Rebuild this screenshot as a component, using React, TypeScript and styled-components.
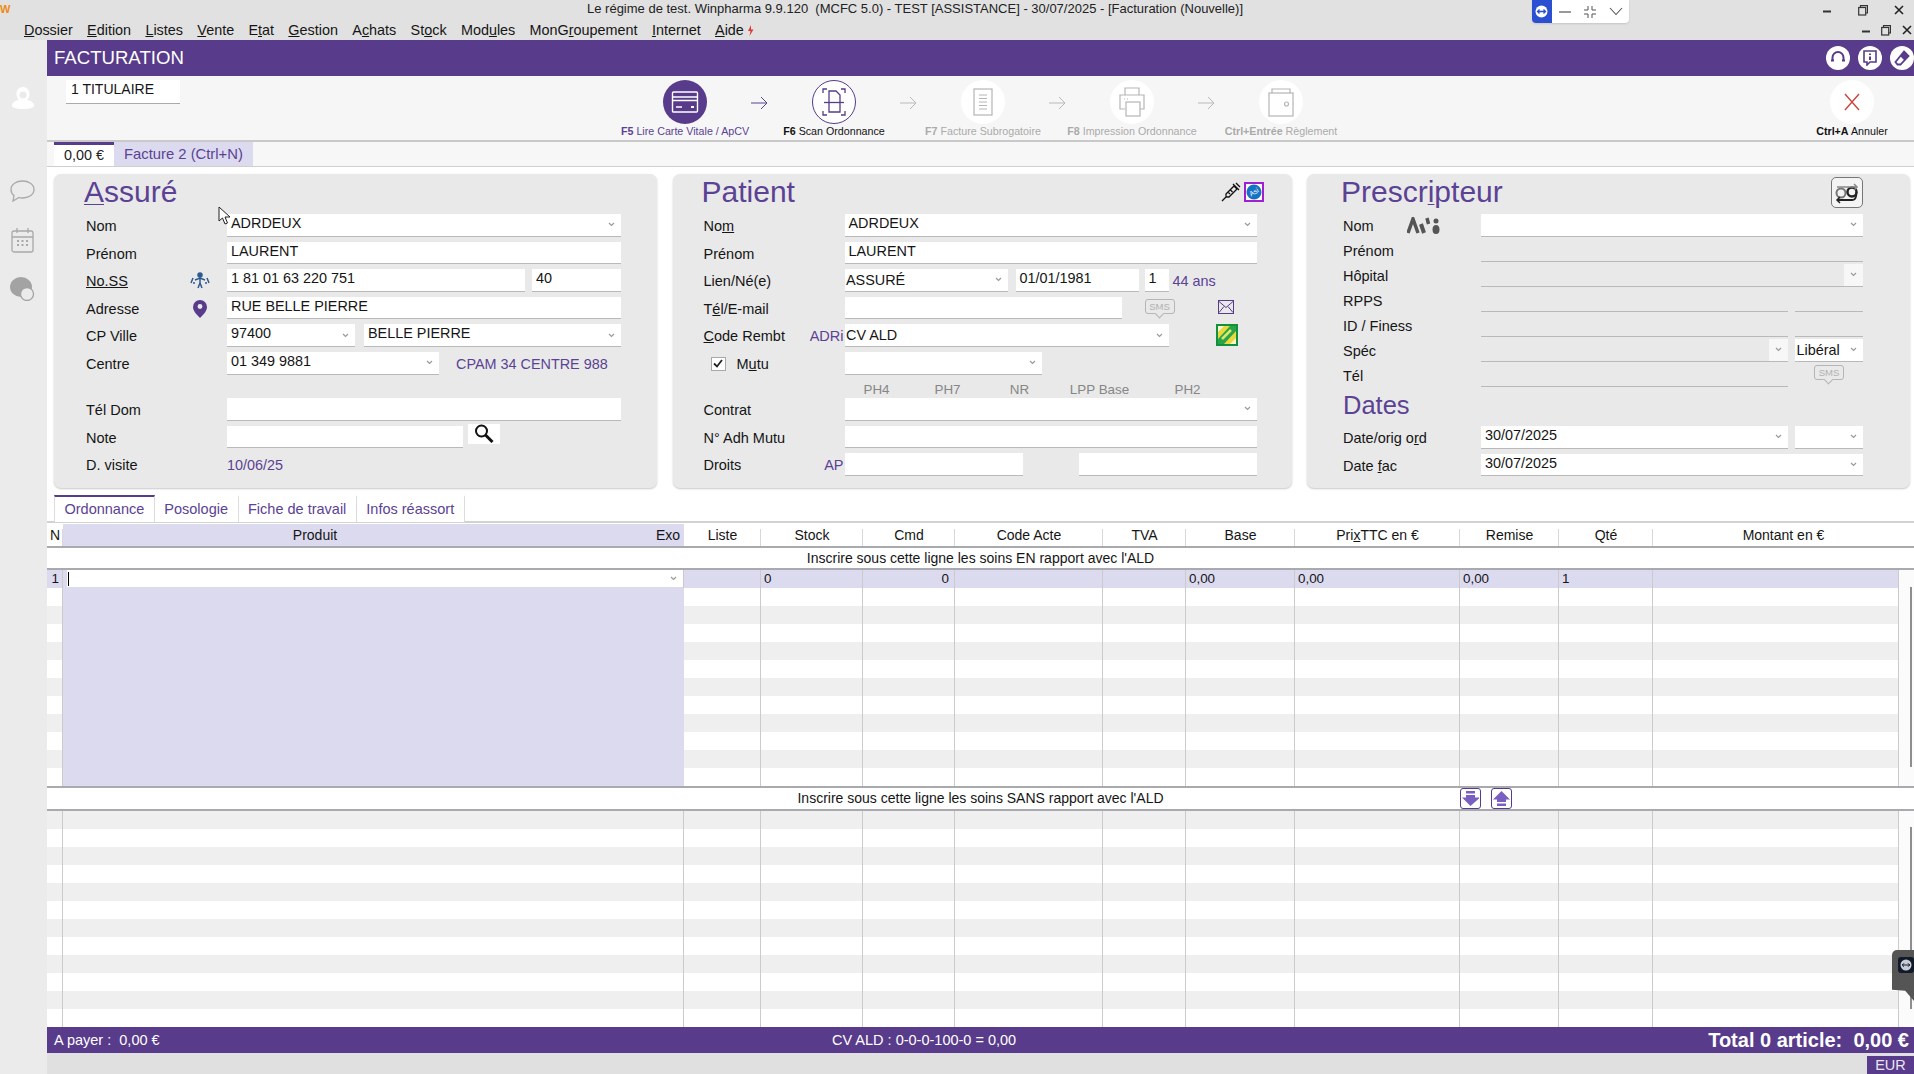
import React from 'react'
import styled, { createGlobalStyle } from 'styled-components'

const PURPLE = '#583b8a'
const TEXT_PURPLE = '#5b4294'
const LAVENDER = '#dcdaef'
const LINE = '#a9a9b0'
const COLS = '16px 621px 77px 102px 92px 148px 83px 109px 165px 99px 94px 246px'

const Global = createGlobalStyle`
  html, body { margin: 0; padding: 0; background: #e1e1e1; }
  body { font-family: "Liberation Sans", Arial, sans-serif; font-size: 14.5px; color: #151515; }
  * { box-sizing: border-box; }
`

const Screen = styled.div`
  width: 1914px;
  height: 1074px;
  overflow: hidden;
  position: relative;
  display: flex;
  flex-direction: column;
  background: #e1e1e1;
`

const TitleBar = styled.div`
  height: 24px;
  display: flex;
  align-items: flex-start;
  flex: none;
`
const AppLogo = styled.div`
  width: 587px;
  font-size: 11px;
  font-weight: 700;
  line-height: 18px;
  color: #f08a12;
`
const AppTitle = styled.div`
  width: 659px;
  white-space: pre;
  font-size: 13px;
  line-height: 18px;
  color: #222;
`
const RemoteBar = styled.div`
  margin-left: 286px;
  width: 97px;
  height: 23px;
  display: flex;
  align-items: center;
  background: #fff;
  border-radius: 0 0 4px 4px;
  box-shadow: 0 1px 2px rgba(0, 0, 0, 0.12);
`
const RemoteBadge = styled.div`
  width: 20px;
  height: 23px;
  display: grid;
  place-items: center;
  background: #2a4fd0;
  border-radius: 0 0 0 4px;
`
const RemoteBtn = styled.div`
  width: 26px;
  display: grid;
  place-items: center;
`
const WinControls = styled.div<{ $w: number; $pr: number }>`
  margin-left: auto;
  width: ${p => p.$w}px;
  display: flex;
  justify-content: space-between;
  align-items: center;
  height: 20px;
  padding-right: ${p => p.$pr}px;
  color: #222;
`

const MenuBar = styled.div`
  height: 16px;
  padding: 0 0 4px 24px;
  display: flex;
  align-items: center;
  gap: 14.3px;
  flex: none;
  line-height: 16px;
  font-size: 14.4px;
`
const MenuItem = styled.span`
  white-space: nowrap;
  u { text-underline-offset: 1px; }
`
const Flash = styled.svg`
  margin-left: -11px;
`

const Body = styled.div`
  display: flex;
  flex: 1;
  min-height: 0;
`
const Sidebar = styled.div`
  width: 47px;
  flex: none;
  background: #ebebeb;
  display: flex;
  flex-direction: column;
  align-items: center;
  padding-top: 47px;
  padding-right: 2px;
`
const SideIcon = styled.div<{ $top: number }>`
  margin-top: ${p => p.$top}px;
  line-height: 0;
`
const Main = styled.div`
  flex: 1;
  min-width: 0;
  display: flex;
  flex-direction: column;
  background: #fff;
`

const PageHeader = styled.div`
  height: 36px;
  flex: none;
  background: ${PURPLE};
  color: #fff;
  display: flex;
  align-items: center;
  padding-left: 7px;
  font-size: 18.6px;
`
const HeaderTools = styled.div`
  margin-left: auto;
  display: flex;
  gap: 8px;
`
const HeaderTool = styled.div`
  width: 24px;
  height: 24px;
  border-radius: 50%;
  background: #fff;
  display: grid;
  place-items: center;
`

const Toolbar = styled.div`
  height: 66px;
  flex: none;
  background: #f6f6f6;
  border-bottom: 2px solid #c9c9c9;
  display: flex;
  align-items: flex-start;
  padding-top: 4px;
`
const Holder = styled.div`
  width: 114px;
  height: 24px;
  margin-left: 19px;
  padding-left: 5px;
  background: #fff;
  border-bottom: 1.5px solid #aaa;
  font-size: 14px;
  line-height: 18px;
`
const Steps = styled.div`
  margin-left: 445px;
  display: flex;
`
const Step = styled.div`
  width: 120px;
  display: flex;
  flex-direction: column;
  align-items: center;
`
const StepCircle = styled.div<{ $kind: 'on' | 'ring' | 'off' }>`
  width: 44px;
  height: 44px;
  border-radius: 50%;
  display: grid;
  place-items: center;
  background: ${p => (p.$kind === 'on' ? PURPLE : '#fff')};
  border: ${p => (p.$kind === 'ring' ? `1.5px solid ${PURPLE}` : 'none')};
`
const StepLabel = styled.div<{ $kind: 'on' | 'ring' | 'off' }>`
  margin-top: 1px;
  font-size: 10.7px;
  line-height: 13px;
  white-space: nowrap;
  color: ${p => (p.$kind === 'on' ? TEXT_PURPLE : p.$kind === 'ring' ? '#111' : '#aaa')};
  b { font-weight: 700; }
`
const StepArrow = styled.div`
  width: 29px;
  height: 46px;
  display: grid;
  place-items: center;
`
const CancelStep = styled(Step)`
  margin-left: auto;
  margin-right: 2px;
`

const TabBar = styled.div`
  height: 25px;
  flex: none;
  background: #f7f7f7;
  border-bottom: 1.5px solid #cfcfcf;
  display: flex;
  padding-left: 7px;
`
const DocTab = styled.div<{ $active?: boolean }>`
  height: 24px;
  padding: 0 10px;
  font-size: ${p => (p.$active ? 14.4 : 14.8)}px;
  color: ${p => (p.$active ? '#222' : TEXT_PURPLE)};
  background: ${p => (p.$active ? '#fff' : LAVENDER)};
  border-top: ${p => (p.$active ? `3px solid ${PURPLE}` : '0')};
  line-height: ${p => (p.$active ? 21 : 24)}px;
`

const Panels = styled.div`
  display: grid;
  grid-template-columns: 603px 619px 603px;
  column-gap: 15.5px;
  padding: 7px 0 0 7px;
  flex: none;
`
const Panel = styled.section<{ $left: number }>`
  height: 314px;
  padding-left: ${p => p.$left}px;
  background: #e9e9e9;
  border-radius: 7px;
  box-shadow: 0 1px 2px rgba(0, 0, 0, 0.22);
`
const PanelHead = styled.div<{ $pr: number }>`
  height: 40px;
  display: flex;
  align-items: flex-start;
  justify-content: space-between;
  padding-right: ${p => p.$pr}px;
`
const PanelTitle = styled.h2`
  margin: 1px 0 0 -2px;
  font-size: 30px;
  line-height: 34px;
  font-weight: 400;
  color: ${TEXT_PURPLE};
  u { text-underline-offset: 2px; text-decoration-thickness: 1px; }
`
const Rows = styled.div<{ $gap?: number }>`
  display: flex;
  flex-direction: column;
  gap: ${p => p.$gap ?? 5.6}px;
`
const Row = styled.div<{ $h?: number }>`
  height: ${p => p.$h ?? 22}px;
  display: flex;
  align-items: flex-start;
`
const Label = styled.div<{ $w: number; $lh?: number }>`
  width: ${p => p.$w}px;
  flex: none;
  height: 100%;
  line-height: ${p => p.$lh ?? 24}px;
  font-size: 14.5px;
  display: flex;
  align-items: flex-start;
  white-space: nowrap;
`
const LabelGlyph = styled.span<{ $x: number }>`
  margin-left: auto;
  margin-right: ${p => p.$x}px;
  line-height: 0;
  padding-top: 3px;
`
const LabelCode = styled.span`
  margin-left: auto;
  color: ${TEXT_PURPLE};
  padding-right: 1px;
`
const Field = styled.div<{ $w: number; $ml?: number; $mt?: number; $tight?: boolean; $clear?: boolean }>`
  width: ${p => p.$w}px;
  flex: none;
  height: ${p => (p.$clear ? 25 : 22.6)}px;
  margin-left: ${p => p.$ml ?? 0}px;
  margin-top: ${p => p.$mt ?? 0}px;
  padding-left: ${p => (p.$tight ? 1.5 : 4)}px;
  background: ${p => (p.$clear ? 'transparent' : '#fff')};
  border-bottom: 1.5px solid #b9b9b9;
  font-size: 14.4px;
  line-height: ${p => (p.$tight ? 22 : 18)}px;
  display: flex;
  align-items: flex-start;
  white-space: nowrap;
`
const Drop = styled.span<{ $box?: boolean }>`
  margin-left: auto;
  width: 19px;
  height: ${p => (p.$box ? '22px' : '100%')};
  align-self: ${p => (p.$box ? 'flex-end' : 'auto')};
  display: grid;
  place-items: center;
  background: ${p => (p.$box ? '#f7f7f7' : 'transparent')};
`
const Note = styled.span<{ $ml?: number }>`
  margin-left: ${p => p.$ml ?? 0}px;
  color: ${TEXT_PURPLE};
  line-height: 24px;
  font-size: 14.4px;
  white-space: nowrap;
`
const Gap = styled.div<{ $h: number }>`
  height: ${p => p.$h}px;
`
const SearchBtn = styled.div`
  width: 32px;
  height: 20px;
  margin: -2px 0 0 5px;
  background: #fff;
  display: grid;
  place-items: center;
`
const Sms = styled.div<{ $ml: number; $mt?: number }>`
  margin-left: ${p => p.$ml}px;
  margin-top: ${p => p.$mt ?? 2}px;
  width: 30px;
  height: 15px;
  border: 1px solid #b5b5b5;
  border-radius: 3px;
  font-size: 9.5px;
  line-height: 13px;
  text-align: center;
  color: #b0b0b0;
  position: relative;
  &::after {
    content: '';
    position: absolute;
    left: 10px;
    bottom: -4px;
    width: 6px;
    height: 6px;
    background: #e9e9e9;
    border-right: 1px solid #b5b5b5;
    border-bottom: 1px solid #b5b5b5;
    transform: rotate(45deg);
  }
`
const RowIcon = styled.div<{ $ml: number; $mt?: number }>`
  margin-left: ${p => p.$ml}px;
  margin-top: ${p => p.$mt ?? 0}px;
  line-height: 0;
`
const Check = styled.div`
  width: 15px;
  height: 14px;
  margin: 5px 11px 0 7px;
  background: #fff;
  border: 1px solid #a8a8a8;
  display: grid;
  place-items: center;
`
const PhRow = styled.div`
  height: 12.8px;
  display: flex;
  color: #868686;
  font-size: 13.4px;
  line-height: 14px;
  padding-top: 3.5px;
`
const PhLabel = styled.span<{ $w: number; $ml?: number }>`
  width: ${p => p.$w}px;
  margin-left: ${p => p.$ml ?? 0}px;
  text-align: center;
  white-space: nowrap;
`
const SwapBtn = styled.div`
  width: 32px;
  height: 31px;
  margin-top: 3px;
  border: 1px solid #777;
  border-radius: 5px;
  background: #f4f4f4;
  display: grid;
  place-items: center;
`
const HeadIcons = styled.div`
  display: flex;
  gap: 3px;
  margin-top: 8px;
`
const SubTitle = styled.h3`
  margin: 0;
  height: 39.3px;
  font-size: 25.5px;
  line-height: 36px;
  font-weight: 400;
  color: ${TEXT_PURPLE};
`

const SubTabs = styled.div`
  height: 28px;
  margin-top: 7px;
  flex: none;
  display: flex;
  padding-left: 7px;
  border-bottom: 2px solid #d2d2d2;
`
const SubTab = styled.div<{ $active?: boolean }>`
  height: 27px;
  padding: 0 ${p => (p.$active ? 9.5 : 9.5)}px;
  font-size: 14.5px;
  color: ${TEXT_PURPLE};
  white-space: nowrap;
  border-right: 1px solid #dcdcdc;
  background: #fff;
  border-top: ${p => (p.$active ? `2px solid ${PURPLE}` : '2px solid transparent')};
  border-left: ${p => (p.$active ? '1px solid #dcdcdc' : '0')};
  line-height: 25px;
`

const HeaderRow = styled.div`
  margin-top: 1px;
  height: 24px;
  flex: none;
  display: grid;
  grid-template-columns: ${COLS} 1fr;
  border-bottom: 2px solid ${LINE};
  font-size: 14px;
`
const HeadCell = styled.div<{ $lav?: boolean; $span?: number }>`
  height: 22px;
  line-height: 22px;
  text-align: center;
  white-space: nowrap;
  grid-column: span ${p => p.$span ?? 1};
  background: ${p => (p.$lav ? LAVENDER : 'transparent')};
  position: relative;
  &::after {
    content: '';
    position: absolute;
    right: 0;
    top: 5px;
    bottom: 0;
    width: 1px;
    background: ${p => (p.$lav || p.$span ? 'transparent' : '#d8d8d8')};
  }
`
const ProductHead = styled(HeadCell)`
  display: flex;
  text-align: left;
  padding-right: 4px;
`
const ProductName = styled.span`
  width: 504px;
  text-align: center;
`
const ProductExo = styled.span`
  margin-left: auto;
`
const NoticeRow = styled.div`
  height: 22px;
  flex: none;
  display: grid;
  grid-template-columns: 1fr 400px 1fr;
  border-bottom: 2px solid ${LINE};
  background: #fff;
  font-size: 14px;
  line-height: 21px;
  text-align: center;
`
const NoticeRow2 = styled(NoticeRow)`
  height: 25px;
  border-top: 2px solid ${LINE};
`
const MoveBtns = styled.div`
  display: flex;
  gap: 10px;
  padding-left: 279px;
`
const MoveBtn = styled.div`
  width: 21px;
  height: 21px;
  border: 1px solid ${PURPLE};
  border-radius: 3px;
  background: #fff;
  display: grid;
  place-items: center;
`
const GridBlock = styled.div`
  display: flex;
  flex: none;
`
const GridRows = styled.div`
  width: 1852px;
`
const GridRow = styled.div<{ $tone: 'white' | 'grey' | 'lav' }>`
  height: 18px;
  display: grid;
  grid-template-columns: ${COLS};
  font-size: 13.4px;
  line-height: 18px;
  background: ${p => (p.$tone === 'lav' ? LAVENDER : p.$tone === 'grey' ? '#efefef' : '#fff')};
`
const GridCell = styled.div<{ $lav?: boolean; $right?: boolean }>`
  border-right: 1px solid ${p => (p.$lav ? 'transparent' : '#cbcbcb')};
  background: ${p => (p.$lav ? LAVENDER : 'transparent')};
  padding: 0 5px 0 3px;
  text-align: ${p => (p.$right ? 'right' : 'left')};
  white-space: nowrap;
`
const BlankCell = styled(GridCell)`
  padding: 0;
`
const NumCell = styled(GridCell)`
  padding: 0 3px 0 0;
  text-align: right;
`
const ProductInput = styled.div`
  height: 17px;
  margin-left: 4px;
  background: #fff;
  display: flex;
  align-items: center;
  justify-content: space-between;
  padding-right: 6px;
`
const Caret = styled.span`
  width: 1px;
  height: 14px;
  margin-left: 1px;
  background: #000;
`
const ScrollTrack = styled.div`
  flex: 1;
  background: #fbfbfb;
`
const ScrollThumb = styled.div<{ $top: number; $h: number }>`
  width: 2px;
  height: ${p => p.$h}px;
  margin: ${p => p.$top}px 0 0 11px;
  background: #8e8e8e;
`
const StatusBar = styled.div`
  height: 26px;
  flex: none;
  background: ${PURPLE};
  color: #fff;
  display: flex;
  align-items: center;
  font-size: 14.5px;
  padding: 0 5px 0 7px;
  white-space: pre;
`
const StatusLeft = styled.div`
  width: 778px;
`
const StatusTotal = styled.div`
  margin-left: auto;
  font-size: 20px;
  font-weight: 700;
`
const FootBar = styled.div`
  height: 21px;
  flex: none;
  background: #e0e0e0;
  display: flex;
  justify-content: flex-end;
  align-items: flex-end;
`
const Currency = styled.div`
  width: 47px;
  height: 18px;
  background: ${PURPLE};
  color: #e8e4f2;
  text-align: center;
  line-height: 18px;
  font-size: 14.5px;
`
const RemoteTab = styled.div`
  position: absolute;
  right: 0;
  top: 950px;
  width: 22px;
  height: 51px;
  background: #555;
  border-radius: 5px 0 0 0;
  clip-path: polygon(0 0, 100% 0, 100% 100%, 60% 80%, 0 78%);
  padding: 7px 0 0 6px;
`
const RemoteTabIcon = styled.div`
  width: 16px;
  height: 16px;
  background: #111a2b;
  border-radius: 3px;
  display: grid;
  place-items: center;
`
const PointerWrap = styled.div`
  position: absolute;
  left: 218px;
  top: 206px;
  line-height: 0;
`

const Chev = () => (
  <svg width="7" height="5" viewBox="0 0 7 5"><path d="M1 1l2.5 2.5L6 1" fill="none" stroke="#9a9a9a" strokeWidth="1.2" /></svg>
)

const Arrow = ({ on }: { on?: boolean }) => (
  <svg width="18" height="14" viewBox="0 0 18 14"><path d="M0 7h16M10 1l6 6-6 6" fill="none" stroke={on ? '#5b4294' : '#b9b9b9'} strokeWidth="1" /></svg>
)

const MinGlyph = () => (
  <svg width="8" height="8" viewBox="0 0 8 8"><path d="M0 5.5h8" stroke="#333" strokeWidth="2" /></svg>
)
const RestoreGlyph = () => (
  <svg width="10" height="11" viewBox="0 0 10 11" fill="none" stroke="#333" strokeWidth="1.2"><path d="M2.5 2V.7h7V8H7.5" /><rect x=".7" y="2.5" width="7" height="7.5" /></svg>
)
const CloseGlyph = () => (
  <svg width="10" height="10" viewBox="0 0 10 10"><path d="M1 1l8 8M9 1l-8 8" stroke="#222" strokeWidth="1.6" /></svg>
)

const CardIcon = () => (
  <svg width="28" height="28" viewBox="0 0 28 28" fill="none" stroke="#fff" strokeWidth="1.4">
    <rect x="1.5" y="4" width="25" height="20" rx="1" />
    <path d="M1.5 9h25M1.5 12.5h25M5 19h6" />
    <path d="M20 19h3" strokeWidth="2" />
  </svg>
)
const ScanIcon = () => (
  <svg width="28" height="30" viewBox="0 0 28 30" fill="none" stroke={PURPLE} strokeWidth="1.3">
    <path d="M3 6V2h4M21 2h4v4M3 24v4h4M21 28h4v-4" />
    <path d="M9 25V4h7l4 4v17z" />
    <path d="M4 15.5h20" />
  </svg>
)
const DocIcon = () => (
  <svg width="20" height="28" viewBox="0 0 20 28" fill="none" stroke="#b5b5b5" strokeWidth="1.2">
    <rect x="1" y="1" width="18" height="26" />
    <path d="M6 7h8M6 10.5h8M6 14h8M6 17.5h8M6 21h8" />
  </svg>
)
const PrinterIcon = () => (
  <svg width="26" height="30" viewBox="0 0 26 30" fill="none" stroke="#b5b5b5" strokeWidth="1.2">
    <path d="M6 8V1h14v7M6 22H1V8h24v14h-4" />
    <rect x="7" y="15" width="14" height="14" fill="#fff" />
    <path d="M5 12h1M8 12h1" />
  </svg>
)
const WalletIcon = () => (
  <svg width="26" height="30" viewBox="0 0 26 30" fill="none" stroke="#b5b5b5" strokeWidth="1.2">
    <path d="M4 6V2h18v4" />
    <rect x="1" y="6" width="24" height="23" />
    <circle cx="18.5" cy="17" r="2" />
  </svg>
)
const CloseIcon = () => (
  <svg width="16" height="20" viewBox="0 0 16 20" fill="none" stroke="#c8453f" strokeWidth="1.4"><path d="M1 2l14 16M15 2L1 18" /></svg>
)

const steps = [
  { key: 'F5', rest: ' Lire Carte Vitale / ApCV', kind: 'on' as const, icon: <CardIcon />, arrow: true },
  { key: 'F6', rest: ' Scan Ordonnance', kind: 'ring' as const, icon: <ScanIcon />, arrow: false },
  { key: 'F7', rest: ' Facture Subrogatoire', kind: 'off' as const, icon: <DocIcon />, arrow: false },
  { key: 'F8', rest: ' Impression Ordonnance', kind: 'off' as const, icon: <PrinterIcon />, arrow: false },
  { key: 'Ctrl+Entrée', rest: ' Règlement', kind: 'off' as const, icon: <WalletIcon /> },
]

const menu: [string, string, string][] = [
  ['', 'D', 'ossier'], ['', 'E', 'dition'], ['', 'L', 'istes'], ['', 'V', 'ente'], ['E', 't', 'at'], ['', 'G', 'estion'],
  ['A', 'c', 'hats'], ['St', 'o', 'ck'], ['Mod', 'u', 'les'], ['MonG', 'r', 'oupement'], ['', 'I', 'nternet'], ['', 'A', 'ide'],
]

const productRows = Array.from({ length: 11 })
const lowerRows = Array.from({ length: 12 })
const columnCount = 12

const BlankRowCells = ({ lav }: { lav?: boolean }) => (
  <>
    {Array.from({ length: columnCount }).map((_, i) => (
      <BlankCell key={i} $lav={lav && i === 1} />
    ))}
  </>
)

export default function App() {
  return (
    <Screen>
      <Global />
      <TitleBar>
        <AppLogo>W</AppLogo>
        <AppTitle>{'Le régime de test. Winpharma 9.9.120  (MCFC 5.0) - TEST [ASSISTANCE] - 30/07/2025 - [Facturation (Nouvelle)]'}</AppTitle>
        <RemoteBar>
          <RemoteBadge>
            <svg width="13" height="13" viewBox="0 0 13 13"><circle cx="6.5" cy="6.5" r="6" fill="#fff" /><path d="M2.500 6.500h8M4.500 4.500l-2 2 2 2M8.500 4.500l2 2-2 2" stroke="#2a4fd0" strokeWidth="1.3" fill="none" /></svg>
          </RemoteBadge>
          <RemoteBtn><svg width="12" height="12" viewBox="0 0 12 12"><path d="M0 6h12" stroke="#555" strokeWidth="1.2" /></svg></RemoteBtn>
          <RemoteBtn><svg width="14" height="14" viewBox="0 0 14 14" fill="none" stroke="#555"><path d="M5 1v4H1M9 1v4h4M5 13V9H1M9 13V9h4" /></svg></RemoteBtn>
          <RemoteBtn><svg width="14" height="9" viewBox="0 0 14 9"><path d="M1 1l6 6.500L13 1" fill="none" stroke="#555" strokeWidth="1.1" /></svg></RemoteBtn>
        </RemoteBar>
        <WinControls $w={91} $pr={10}>
          <MinGlyph />
          <RestoreGlyph />
          <CloseGlyph />
        </WinControls>
      </TitleBar>
      <MenuBar>
        {menu.map(([a, u, b]) => (
          <MenuItem key={a + u + b}>{a}<u>{u}</u>{b}</MenuItem>
        ))}
        <Flash width="7" height="11" viewBox="0 0 7 11"><path d="M4 0L1 6h2.500L2.500 11 6.500 4.500H4z" fill="#e0383a" /></Flash>
        <WinControls $w={52} $pr={2}>
          <MinGlyph />
          <RestoreGlyph />
          <CloseGlyph />
        </WinControls>
      </MenuBar>
      <Body>
        <Sidebar>
          <SideIcon $top={0}>
            <svg width="26" height="22" viewBox="0 0 26 22"><path d="M13 0c4 0 6.500 3 6.500 7 0 2.500-1 4.500-2.500 6 3 .5 7 2 7 6 0 1.500-4 3-11 3S2 20.500 2 19c0-4 4-5.500 7-6-1.500-1.500-2.500-3.500-2.500-6 0-4 2.500-7 6.500-7z" fill="#fff" /><circle cx="13" cy="8" r="3.500" fill="#ebebeb" /></svg>
          </SideIcon>
          <SideIcon $top={71}>
            <svg width="25" height="22" viewBox="0 0 25 22" fill="none" stroke="#a9a9a9" strokeWidth="1.3"><path d="M12.500 1C18.500 1 24 4.200 24 9.500S18.500 18 12.500 18c-1.200 0-2.500-.2-3.500-.5L3 21l1-5.500C2 14 1 12 1 9.500 1 4.200 6.500 1 12.500 1z" /></svg>
          </SideIcon>
          <SideIcon $top={26}>
            <svg width="23" height="25" viewBox="0 0 23 25" fill="none" stroke="#a9a9a9" strokeWidth="1.3"><rect x="1" y="3" width="21" height="21" rx="2" /><path d="M1 9h21M6 0v5M17 0v5" /><path d="M6 13h2M10.500 13h2M15 13h2M6 17h2M10.500 17h2M15 17h2" strokeWidth="2" /></svg>
          </SideIcon>
          <SideIcon $top={24}>
            <svg width="25" height="24" viewBox="0 0 25 24"><ellipse cx="11" cy="10" rx="11" ry="10" fill="#a3a3a3" /><circle cx="17" cy="17" r="6.500" fill="#ebebeb" stroke="#a3a3a3" strokeWidth="1.3" /></svg>
          </SideIcon>
        </Sidebar>
        <Main>
          <PageHeader>
            FACTURATION
            <HeaderTools>
              <HeaderTool>
                <svg width="16" height="16" viewBox="0 0 16 16" fill="none" stroke={PURPLE} strokeWidth="2"><path d="M2.500 11V7.500a5.500 5.500 0 0 1 11 0V11" /><path d="M2.500 9.500v2M13.500 9.500v2" strokeWidth="3" /></svg>
              </HeaderTool>
              <HeaderTool>
                <svg width="14" height="16" viewBox="0 0 14 16"><path d="M1 1h12v11H7l-3 3v-3H1z" fill="none" stroke={PURPLE} strokeWidth="1.6" /><path d="M7 3.500v1.500M7 6.500V10" stroke={PURPLE} strokeWidth="2" /></svg>
              </HeaderTool>
              <HeaderTool>
                <svg width="16" height="16" viewBox="0 0 16 16"><path d="M10 1.500l4.500 4.500-8 8.500H3.500L1.500 12z" fill="none" stroke={PURPLE} strokeWidth="1.8" /><path d="M10 1.500l4.500 4.500-4 4.500L6 6z" fill={PURPLE} /></svg>
              </HeaderTool>
            </HeaderTools>
          </PageHeader>

          <Toolbar>
            <Holder>1 TITULAIRE</Holder>
            <Steps>
              {steps.map((s, i) => (
                <React.Fragment key={s.key}>
                  <Step>
                    <StepCircle $kind={s.kind}>{s.icon}</StepCircle>
                    <StepLabel $kind={s.kind}><b>{s.key}</b>{s.rest}</StepLabel>
                  </Step>
                  {i < steps.length - 1 && <StepArrow><Arrow on={s.arrow} /></StepArrow>}
                </React.Fragment>
              ))}
            </Steps>
            <CancelStep>
              <StepCircle $kind="off"><CloseIcon /></StepCircle>
              <StepLabel $kind="ring"><b>Ctrl+A</b> Annuler</StepLabel>
            </CancelStep>
          </Toolbar>

          <TabBar>
            <DocTab $active>0,00 €</DocTab>
            <DocTab>Facture 2 (Ctrl+N)</DocTab>
          </TabBar>

          <Panels>
            <Panel $left={32}>
              <PanelHead $pr={29}>
                <PanelTitle><u>A</u>ssuré</PanelTitle>
              </PanelHead>
              <Rows>
                <Row><Label $w={141}>Nom</Label><Field $w={394}>ADRDEUX<Drop><Chev /></Drop></Field></Row>
                <Row><Label $w={141}>Prénom</Label><Field $w={394}>LAURENT</Field></Row>
                <Row>
                  <Label $w={141}>
                    <u>No.SS</u>
                    <LabelGlyph $x={17}>
                      <svg width="20" height="17" viewBox="0 0 20 17" fill="none" stroke="#2e5a8f" strokeWidth="1.5"><circle cx="10" cy="3" r="2" fill="#2e5a8f" /><path d="M10 5v6M10 11l-2 5M10 11l2 5M5 8l5-2 5 2M3 6l-2 5M17 6l2 5M3 11h2M15 11h2" /></svg>
                    </LabelGlyph>
                  </Label>
                  <Field $w={298}>1 81 01 63 220 751</Field>
                  <Field $w={89} $ml={7}>40</Field>
                </Row>
                <Row>
                  <Label $w={141}>
                    Adresse
                    <LabelGlyph $x={20}>
                      <svg width="14" height="18" viewBox="0 0 14 18"><path d="M7 0a7 7 0 0 1 7 7c0 4-4 8-7 11-3-3-7-7-7-11a7 7 0 0 1 7-7z" fill={PURPLE} /><circle cx="7" cy="6.500" r="2.400" fill="#e9e9e9" /></svg>
                    </LabelGlyph>
                  </Label>
                  <Field $w={394}>RUE BELLE PIERRE</Field>
                </Row>
                <Row><Label $w={141}>CP Ville</Label><Field $w={128}>97400<Drop><Chev /></Drop></Field><Field $w={257} $ml={9}>BELLE PIERRE<Drop><Chev /></Drop></Field></Row>
                <Row><Label $w={141}>Centre</Label><Field $w={212}>01 349 9881<Drop><Chev /></Drop></Field><Note $ml={17}>CPAM 34 CENTRE 988</Note></Row>
                <Gap $h={12.8} />
                <Row><Label $w={141}>Tél Dom</Label><Field $w={394} /></Row>
                <Row>
                  <Label $w={141}>Note</Label>
                  <Field $w={236} />
                  <SearchBtn>
                    <svg width="20" height="19" viewBox="0 0 20 19" fill="none" stroke="#111"><circle cx="7.500" cy="7" r="5.500" strokeWidth="2" /><path d="M11.500 11l7 7" strokeWidth="3" /></svg>
                  </SearchBtn>
                </Row>
                <Row><Label $w={141}>D. visite</Label><Note>10/06/25</Note></Row>
              </Rows>
            </Panel>

            <Panel $left={31}>
              <PanelHead $pr={28}>
                <PanelTitle>Patient</PanelTitle>
                <HeadIcons>
                  <svg width="20" height="20" viewBox="0 0 20 20" fill="none" stroke="#111" strokeWidth="1.3"><path d="M5 12l8-8 3 3-8 8H5zM1 19l4-4M12 2l6 6M15 1l4 4M7 10l2 2M9.500 8l2 2" /></svg>
                  <svg width="20" height="20" viewBox="0 0 20 20"><rect x="1" y="1" width="18" height="18" fill="#fff" stroke="#a020d0" strokeWidth="2" /><circle cx="10" cy="10" r="7.500" fill="#1672c4" /><text x="10" y="12.500" fontSize="7" fontFamily="Liberation Sans" textAnchor="middle" fill="#fff" transform="rotate(-30 10 10)">Asi</text></svg>
                </HeadIcons>
              </PanelHead>
              <Rows>
                <Row><Label $w={141}><span>No<u>m</u></span></Label><Field $w={412}>ADRDEUX<Drop><Chev /></Drop></Field></Row>
                <Row><Label $w={141}>Prénom</Label><Field $w={412}>LAURENT</Field></Row>
                <Row>
                  <Label $w={141}>Lien/Né(e)</Label>
                  <Field $w={163} $tight>ASSURÉ<Drop><Chev /></Drop></Field>
                  <Field $w={123} $ml={8}>01/01/1981</Field>
                  <Field $w={24} $ml={6}>1</Field>
                  <Note $ml={4}>44 ans</Note>
                </Row>
                <Row>
                  <Label $w={141}><span>T<u>é</u>l/E-mail</span></Label>
                  <Field $w={277} />
                  <Sms $ml={23}>SMS</Sms>
                  <RowIcon $ml={43} $mt={3}>
                    <svg width="16" height="14" viewBox="0 0 16 14" fill="none" stroke={PURPLE}><rect x=".5" y=".5" width="15" height="13" /><path d="M1 1.500l7 6 7-6M1 12.500l5-6M15 12.500l-5-6" /></svg>
                  </RowIcon>
                </Row>
                <Row>
                  <Label $w={141}><span><u>C</u>ode Rembt</span><LabelCode>ADRi</LabelCode></Label>
                  <Field $w={324} $tight>CV ALD<Drop><Chev /></Drop></Field>
                  <RowIcon $ml={47}>
                    <svg width="22" height="22" viewBox="0 0 22 22"><rect x="1" y="1" width="20" height="20" fill="#e8d93f" stroke="#12913c" strokeWidth="2" /><path d="M2 15L14 2h6v5L8 20H2z" fill="#2aa34a" /><path d="M2 8L8 2H2zM20 14v6h-6z" fill="#ffffff" opacity=".75" /><path d="M6 15L15 6" stroke="#d9e86a" strokeWidth="2.500" /></svg>
                  </RowIcon>
                </Row>
                <Row>
                  <Label $w={141}><Check><svg width="10" height="9" viewBox="0 0 10 9"><path d="M1 4.500l3 3L9 1" fill="none" stroke="#222" strokeWidth="1.8" /></svg></Check><span>M<u>u</u>tu</span></Label>
                  <Field $w={197}><Drop><Chev /></Drop></Field>
                </Row>
                <PhRow>
                  <PhLabel $w={60} $ml={143}>PH4</PhLabel>
                  <PhLabel $w={60} $ml={11}>PH7</PhLabel>
                  <PhLabel $w={60} $ml={12}>NR</PhLabel>
                  <PhLabel $w={80} $ml={10}>LPP Base</PhLabel>
                  <PhLabel $w={60} $ml={18}>PH2</PhLabel>
                </PhRow>
                <Row><Label $w={141}>Contrat</Label><Field $w={412}><Drop><Chev /></Drop></Field></Row>
                <Row><Label $w={141}>N° Adh Mutu</Label><Field $w={412} /></Row>
                <Row>
                  <Label $w={141}>Droits<LabelCode>AP</LabelCode></Label>
                  <Field $w={178} />
                  <Field $w={178} $ml={56} />
                </Row>
              </Rows>
            </Panel>

            <Panel $left={36}>
              <PanelHead $pr={47}>
                <PanelTitle><span>Prescr<u>i</u>pteur</span></PanelTitle>
                <SwapBtn>
                  <svg width="26" height="26" viewBox="0 0 26 26" fill="none" stroke="#222"><circle cx="7" cy="13" r="4.500" stroke="#777" strokeWidth="2" /><circle cx="18" cy="12" r="4.500" strokeWidth="2.400" /><path d="M22.500 12c0 5-1 8-4 8H3" strokeWidth="1.800" /><path d="M6 17l-3 3 3 3" strokeWidth="1.500" /><path d="M3 7h20M20 4l3 3-3 3" stroke="#888" strokeWidth="1.500" /></svg>
                </SwapBtn>
              </PanelHead>
              <Rows $gap={0}>
                <Row $h={22.7}>
                  <Label $w={138}>
                    Nom
                    <LabelGlyph $x={40}>
                      <svg width="34" height="18" viewBox="0 0 34 18" fill="none" stroke="#555"><path d="M1 16L6 2l5 14" strokeWidth="3.5" /><path d="M14 7l3 9" strokeWidth="4" /><path d="M20 1l1.500 6" strokeWidth="3.500" /><circle cx="29" cy="4" r="2.500" fill="#555" stroke="none" /><ellipse cx="29" cy="12.500" rx="3.500" ry="4.500" fill="#555" stroke="none" /></svg>
                    </LabelGlyph>
                  </Label>
                  <Field $w={382}><Drop><Chev /></Drop></Field>
                </Row>
                <Row $h={25}><Label $w={138} $lh={28}>Prénom</Label><Field $w={382} $clear /></Row>
                <Row $h={25}><Label $w={138} $lh={28}>Hôpital</Label><Field $w={382} $clear><Drop $box><Chev /></Drop></Field></Row>
                <Row $h={25}><Label $w={138} $lh={28}>RPPS</Label><Field $w={307} $clear /><Field $w={68} $ml={7} $clear /></Row>
                <Row $h={25}><Label $w={138} $lh={28}>ID / Finess</Label><Field $w={307} $clear /><Field $w={68} $ml={7} $clear /></Row>
                <Row $h={25}>
                  <Label $w={138} $lh={28}>Spéc</Label>
                  <Field $w={307} $clear><Drop $box><Chev /></Drop></Field>
                  <Field $w={68} $ml={7} $mt={2.4} $tight>Libéral<Drop><Chev /></Drop></Field>
                </Row>
                <Row $h={25}>
                  <Label $w={138} $lh={28}>Tél</Label>
                  <Field $w={307} $clear />
                  <Sms $ml={26} $mt={3}>SMS</Sms>
                </Row>
              </Rows>
              <SubTitle>Dates</SubTitle>
              <Rows>
                <Row>
                  <Label $w={138}><span>Date/orig o<u>r</u>d</span></Label>
                  <Field $w={307}>30/07/2025<Drop><Chev /></Drop></Field>
                  <Field $w={68} $ml={7}><Drop><Chev /></Drop></Field>
                </Row>
                <Row>
                  <Label $w={138}><span>Date <u>f</u>ac</span></Label>
                  <Field $w={382}>30/07/2025<Drop><Chev /></Drop></Field>
                </Row>
              </Rows>
            </Panel>
          </Panels>

          <SubTabs>
            <SubTab $active>Ordonnance</SubTab>
            <SubTab>Posologie</SubTab>
            <SubTab>Fiche de travail</SubTab>
            <SubTab>Infos réassort</SubTab>
          </SubTabs>

          <HeaderRow>
            <HeadCell>N</HeadCell>
            <ProductHead $lav><ProductName>Produit</ProductName><ProductExo>Exo</ProductExo></ProductHead>
            <HeadCell>Liste</HeadCell>
            <HeadCell>Stock</HeadCell>
            <HeadCell>Cmd</HeadCell>
            <HeadCell>Code Acte</HeadCell>
            <HeadCell>TVA</HeadCell>
            <HeadCell>Base</HeadCell>
            <HeadCell>Pri<u>x</u>TTC en €</HeadCell>
            <HeadCell>Remise</HeadCell>
            <HeadCell>Qté</HeadCell>
            <HeadCell $span={2}>Montant en €</HeadCell>
          </HeaderRow>
          <NoticeRow>
            <span />
            <span>Inscrire sous cette ligne les soins EN rapport avec l'ALD</span>
            <span />
          </NoticeRow>
          <GridBlock>
            <GridRows>
              <GridRow $tone="lav">
                <NumCell>1</NumCell>
                <BlankCell>
                  <ProductInput><Caret /><Chev /></ProductInput>
                </BlankCell>
                <GridCell />
                <GridCell>0</GridCell>
                <GridCell $right>0</GridCell>
                <GridCell />
                <GridCell />
                <GridCell>0,00</GridCell>
                <GridCell>0,00</GridCell>
                <GridCell>0,00</GridCell>
                <GridCell>1</GridCell>
                <GridCell />
              </GridRow>
              {productRows.map((_, i) => (
                <GridRow key={i} $tone={i % 2 ? 'grey' : 'white'}><BlankRowCells lav /></GridRow>
              ))}
            </GridRows>
            <ScrollTrack><ScrollThumb $top={17} $h={180} /></ScrollTrack>
          </GridBlock>
          <NoticeRow2>
            <span />
            <span>Inscrire sous cette ligne les soins SANS rapport avec l'ALD</span>
            <MoveBtns>
              <MoveBtn>
                <svg width="17" height="17" viewBox="0 0 17 17" fill="#7a5fc0"><path d="M4 1h9v2.500H4zM4 5h9v2.500h5L8.500 16 0 7.500h4z" /></svg>
              </MoveBtn>
              <MoveBtn>
                <svg width="17" height="17" viewBox="0 0 17 17" fill="#7a5fc0"><path d="M8.500 1L17 9.500h-4V12H4V9.500H0zM4 13.500h9V16H4z" /></svg>
              </MoveBtn>
            </MoveBtns>
          </NoticeRow2>
          <GridBlock>
            <GridRows>
              {lowerRows.map((_, i) => (
                <GridRow key={i} $tone={i % 2 ? 'white' : 'grey'}><BlankRowCells /></GridRow>
              ))}
            </GridRows>
            <ScrollTrack><ScrollThumb $top={16} $h={182} /></ScrollTrack>
          </GridBlock>
          <StatusBar>
            <StatusLeft>{'A payer :  0,00 €'}</StatusLeft>
            CV ALD : 0-0-0-100-0 = 0,00
            <StatusTotal>{'Total 0 article:  0,00 €'}</StatusTotal>
          </StatusBar>
          <FootBar><Currency>EUR</Currency></FootBar>
        </Main>
      </Body>
      <RemoteTab>
        <RemoteTabIcon>
          <svg width="12" height="12" viewBox="0 0 12 12"><circle cx="6" cy="6" r="5.500" fill="#c9ccd6" /><path d="M2 6h8M4 4.300L2.300 6 4 7.700M8 4.300L9.700 6 8 7.700" stroke="#111a2b" fill="none" /></svg>
        </RemoteTabIcon>
      </RemoteTab>
      <PointerWrap>
        <svg width="13" height="19" viewBox="0 0 13 19"><path d="M1 1v14l3.500-3 2.500 6 2.500-1-2.500-6H12z" fill="#fff" stroke="#222" /></svg>
      </PointerWrap>
    </Screen>
  )
}
